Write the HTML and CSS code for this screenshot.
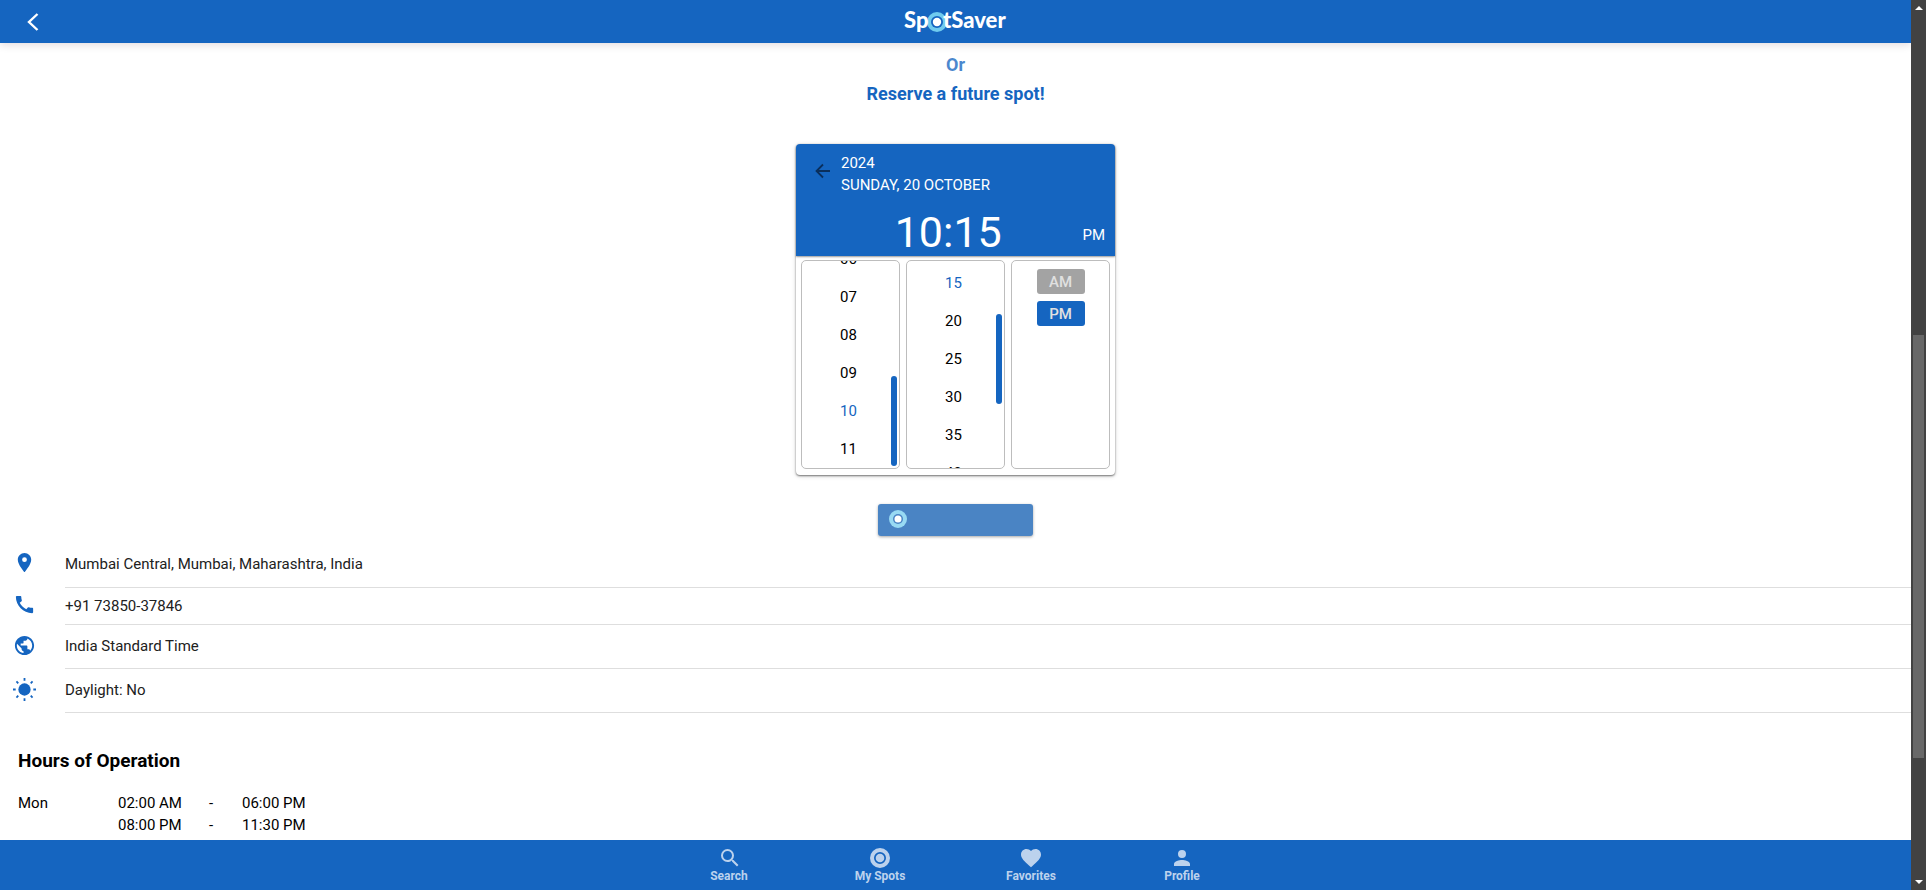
FILE: index.html
```html
<!DOCTYPE html>
<html lang="en">
<head>
<meta charset="utf-8">
<title>SpotSaver</title>
<link rel="stylesheet" href="styles.css">
</head>
<body>
<div class="app">
  <header class="topbar">
    <button class="back" type="button" aria-label="Back">
      <svg width="12" height="18" viewBox="0 0 12 18"><path d="M10.500 1 2 9l8.500 8" fill="none" stroke="#fff" stroke-width="2.400"/></svg>
    </button>
    <svg class="logo" width="104" height="32" viewBox="0 0 104 32" role="img" aria-label="SpotSaver">
      <circle cx="33" cy="16" r="10" fill="#70cbee"/>
      <circle cx="33" cy="16" r="6" fill="#1565c0"/>
      <circle cx="33" cy="16" r="4.200" fill="#fff"/>
      <text x="0" y="22">Sp</text>
      <text x="39" y="22">tSaver</text>
    </svg>
  </header>

  <main class="content">
    <p class="or">Or</p>
    <h1 class="reserve">Reserve a future spot!</h1>

    <section class="picker" aria-label="Time picker">
      <div class="picker-head">
        <button class="picker-back" type="button" aria-label="Back to date">
          <svg width="16" height="16" viewBox="0 0 16 16"><path d="M15 8H2M8 1.500 1.500 8 8 14.500" fill="none" stroke="#0a2f5c" stroke-width="1.800"/></svg>
        </button>
        <div class="picker-date"><span>2024</span><span>SUNDAY, 20 OCTOBER</span></div>
        <div class="picker-time">10:15</div>
        <div class="picker-period">PM</div>
      </div>
      <div class="picker-body">
        <div class="wheel hours">
          <button type="button">06</button>
          <button type="button">07</button>
          <button type="button">08</button>
          <button type="button">09</button>
          <button type="button" class="chosen">10</button>
          <button type="button">11</button>
          <span class="thumb"></span>
        </div>
        <div class="wheel minutes">
          <button type="button" class="chosen">15</button>
          <button type="button">20</button>
          <button type="button">25</button>
          <button type="button">30</button>
          <button type="button">35</button>
          <button type="button">40</button>
          <span class="thumb"></span>
        </div>
        <div class="wheel period">
          <button type="button" class="chip">AM</button>
          <button type="button" class="chip active">PM</button>
        </div>
      </div>
    </section>

    <button class="save" type="button" aria-label="Reserve spot">
      <svg width="18" height="18" viewBox="0 0 18 18"><circle cx="9" cy="9" r="9" fill="#98daf3"/><circle cx="9" cy="9" r="5" fill="#4a84c4"/><circle cx="9" cy="9" r="3.500" fill="#fff"/></svg>
    </button>

    <ul class="info">
      <li>
        <svg viewBox="0 0 24 24"><path d="M12 2C8.130 2 5 5.130 5 9c0 5.250 7 13 7 13s7-7.750 7-13c0-3.870-3.130-7-7-7zm0 9.500a2.500 2.500 0 1 1 0-5 2.500 2.500 0 0 1 0 5z"/></svg>
        <span class="line tall">Mumbai Central, Mumbai, Maharashtra, India</span>
      </li>
      <li>
        <svg viewBox="0 0 24 24"><path d="M20.010 15.380c-1.230 0-2.420-.2-3.530-.56a.98.98 0 0 0-1.010.24l-1.570 1.970c-2.830-1.350-5.480-3.900-6.890-6.830l1.950-1.660c.27-.28.35-.67.24-1.020-.37-1.110-.56-2.300-.56-3.530 0-.54-.45-.99-.99-.99H4.190C3.650 3 3 3.240 3 3.990 3 13.280 10.730 21 20.010 21c.71 0 .99-.63.99-1.180v-3.450c0-.54-.45-.99-.99-.99z"/></svg>
        <span class="line short"><a href="tel:+917385037846">+91 73850-37846</a></span>
      </li>
      <li>
        <svg viewBox="0 0 24 24"><path d="M12 2C6.480 2 2 6.480 2 12s4.480 10 10 10 10-4.480 10-10S17.520 2 12 2zm-1 17.930c-3.950-.49-7-3.850-7-7.930 0-.62.08-1.210.21-1.790L9 15v1c0 1.100.9 2 2 2v1.930zm6.900-2.540c-.26-.81-1-1.390-1.900-1.390h-1v-3c0-.55-.45-1-1-1H8v-2h2c.55 0 1-.45 1-1V7h2c1.100 0 2-.9 2-2v-.41c2.930 1.190 5 4.060 5 7.410 0 2.080-.8 3.970-2.100 5.390z"/></svg>
        <span class="line">India Standard Time</span>
      </li>
      <li>
        <svg viewBox="0 0 24 24"><circle cx="12" cy="12" r="6.400"/><path d="M12 0v2.800M12 21.200V24M0 12h2.800M21.200 12H24M3.600 3.600 5.500 5.500M18.500 18.500l1.900 1.900M3.600 20.400l1.900-1.900M18.500 5.500l1.900-1.900" fill="none" stroke="#1565c0" stroke-width="1.900"/></svg>
        <span class="line">Daylight: No</span>
      </li>
    </ul>

    <section class="schedule">
      <h2>Hours of Operation</h2>
      <table>
        <tr><th scope="row">Mon</th><td class="start">02:00 AM</td><td class="dash">-</td><td>06:00 PM</td></tr>
        <tr><th></th><td>08:00 PM</td><td>-</td><td>11:30 PM</td></tr>
      </table>
    </section>
  </main>

  <nav class="tabs">
    <a href="#search"><svg width="22" height="20" viewBox="1 2 20 20"><path d="M15.500 14h-.79l-.28-.27A6.470 6.470 0 0 0 16 9.500 6.500 6.500 0 1 0 9.500 16c1.610 0 3.090-.59 4.230-1.570l.27.28v.79l5 4.990L20.490 19l-4.990-5zm-6 0a4.500 4.500 0 1 1 0-9 4.500 4.500 0 0 1 0 9z"/></svg>Search</a>
    <a href="#spots"><svg width="20" height="20" viewBox="0 0 20 20"><path fill-rule="evenodd" d="M10 0a10 10 0 1 0 0 20 10 10 0 0 0 0-20zm0 4a6 6 0 1 1 0 12 6 6 0 0 1 0-12z"/><circle cx="10" cy="10" r="4.300"/></svg>My Spots</a>
    <a href="#favorites"><svg width="22" height="20" viewBox="1 2 22 20"><path d="m12 21.350-1.450-1.320C5.400 15.360 2 12.280 2 8.500 2 5.420 4.420 3 7.500 3c1.740 0 3.410.81 4.500 2.090C13.090 3.810 14.760 3 16.500 3 19.580 3 22 5.420 22 8.500c0 3.780-3.400 6.860-8.550 11.540z"/></svg>Favorites</a>
    <a href="#profile"><svg width="22" height="20" viewBox="1 2 22 20"><path d="M12 12a4 4 0 1 0 0-8 4 4 0 0 0 0 8zm0 2c-2.670 0-8 1.340-8 4v2h16v-2c0-2.660-5.330-4-8-4z"/></svg>Profile</a>
  </nav>
</div>

<div class="scrollbar" aria-hidden="true">
  <svg width="8" height="4" viewBox="0 0 8 4"><path d="M4 0 8 4H0z" fill="#fff"/></svg>
  <div class="track"><div class="track-thumb"></div></div>
  <svg width="8" height="4" viewBox="0 0 8 4"><path d="M0 0h8L4 4z" fill="#fff"/></svg>
</div>
</body>
</html>
```
FILE: styles.css
```css
* { box-sizing: border-box; }

body {
  margin: 0;
  height: 100vh;
  display: flex;
  overflow: hidden;
  background: #fff;
  color: #000;
  font: 15px/22px Roboto, "Liberation Sans", sans-serif;
}

button {
  border: 0;
  padding: 0;
  background: none;
  color: inherit;
  font: inherit;
  cursor: pointer;
}

a { color: inherit; text-decoration: none; }

.app {
  flex: 1;
  min-width: 0;
  display: flex;
  flex-direction: column;
}

/* Top bar */
.topbar {
  flex: none;
  display: grid;
  grid-template-columns: 1fr auto 1fr;
  align-items: center;
  height: 43px;
  padding: 0 27px;
  background: #1565c0;
  box-shadow: 0 2px 8px rgba(60, 0, 20, 0.14);
}

.back { justify-self: start; display: flex; }

.logo { display: block; overflow: visible; }

.logo text {
  fill: #fff;
  font: 900 22px Lato, sans-serif;
}

/* Page content */
.content {
  flex: 1;
  min-height: 0;
  overflow: hidden;
  display: flex;
  flex-direction: column;
}

.content > * { flex: none; }

.or,
.reserve {
  margin: 0;
  color: #1565c0;
  font-size: 18px;
  font-weight: 700;
  line-height: 29px;
  text-align: center;
}

.or { padding-top: 7px; opacity: 0.77; }

/* Time picker */
.picker {
  width: 319px;
  margin: 36px auto 0;
  border-radius: 4px;
  box-shadow: 0 1px 2px rgba(0, 0, 0, 0.5), 0 1px 5px rgba(0, 0, 0, 0.15);
}

.picker-head {
  display: grid;
  grid-template-columns: 45px 1fr auto;
  padding: 8px 10px 0 0;
  border-radius: 4px 4px 0 0;
  background: #1565c0;
  color: #fff;
  box-shadow: 0 1px 2px rgba(0, 0, 0, 0.4);
}

.picker-back { align-self: start; justify-self: end; margin: 11px 10px 0 0; display: flex; }

.picker-date {
  grid-column: 2 / 4;
  display: flex;
  flex-direction: column;
}

.picker-time {
  grid-column: 1 / 3;
  padding: 12px 0 0 18px;
  font-size: 43px;
  line-height: 48px;
  text-align: center;
}

.picker-period { align-self: end; padding-bottom: 10px; }

.picker-body {
  display: grid;
  grid-template-columns: repeat(3, 1fr);
  gap: 6px;
  padding: 4px 5px 6px;
}

.wheel {
  position: relative;
  display: flex;
  flex-direction: column;
  height: 209px;
  padding-right: 4px;
  overflow: hidden;
  border: 1px solid #bdbdbd;
  border-radius: 5px;
}

.wheel button { flex: none; line-height: 38px; }
.wheel .chosen { color: #1565c0; }
.hours { justify-content: flex-end; }
.minutes { padding-top: 3px; }

.thumb {
  position: absolute;
  right: 2px;
  width: 6px;
  height: 90px;
  border-radius: 3px;
  background: #1565c0;
}

.hours .thumb { bottom: 2px; }
.minutes .thumb { top: 53px; }

.period {
  align-items: center;
  gap: 7px;
  padding: 8px 0;
}

.wheel .chip {
  width: 48px;
  padding-top: 1px;
  border-radius: 3px;
  background: #a3a3a3;
  color: #e0e0e0;
  font-weight: 500;
  line-height: 24px;
}

.wheel .active { background: #1565c0; }

.save {
  display: flex;
  align-items: center;
  align-self: center;
  width: 155px;
  height: 32px;
  margin-top: 29px;
  padding: 0 11px 2px;
  border-radius: 3px;
  background: #4a84c4;
  box-shadow: 0 1px 3px rgba(0, 0, 0, 0.35);
}

/* Location details */
.info {
  margin: 5px 0 0;
  padding: 0 0 0 13px;
  list-style: none;
  color: #212121;
}

.info li {
  display: grid;
  grid-template-columns: 52px 1fr;
  align-items: center;
}

.info svg { width: 23px; height: 23px; margin-bottom: 4px; fill: #1565c0; }

.line {
  padding: 10px 0 11px;
  border-bottom: 1px solid #dedede;
}

.tall { padding: 12px 0; }
.short { padding: 7px 0; }

/* Opening hours */
.schedule { padding: 36px 18px 0; }

.schedule h2 {
  margin: 0 0 19px;
  font-size: 19px;
  font-weight: 700;
  line-height: 24px;
}

.schedule table { border-collapse: collapse; }

.schedule th,
.schedule td {
  padding: 0;
  font-weight: 400;
  text-align: left;
}

.schedule th { width: 100px; }
.start { width: 91px; }
.dash { width: 33px; }

/* Bottom tabs */
.tabs {
  flex: none;
  display: grid;
  grid-template-columns: repeat(4, 151px);
  justify-content: center;
  height: 50px;
  background: #1565c0;
  color: #bcd2ed;
  font-size: 12px;
  font-weight: 700;
  line-height: 14px;
}

.tabs a {
  display: flex;
  flex-direction: column;
  align-items: center;
  justify-content: center;
  gap: 1px;
}

.tabs svg { fill: #bcd2ed; }

/* Window scrollbar */
.scrollbar {
  flex: none;
  display: flex;
  flex-direction: column;
  align-items: center;
  width: 15px;
  padding: 6px 0;
  background: #424242;
}

.track {
  flex: 1;
  display: grid;
  grid-template-rows: 318fr 423fr 115fr;
  padding: 7px 0;
}

.track-thumb {
  grid-row: 2;
  width: 11px;
  background: #686868;
}
```
